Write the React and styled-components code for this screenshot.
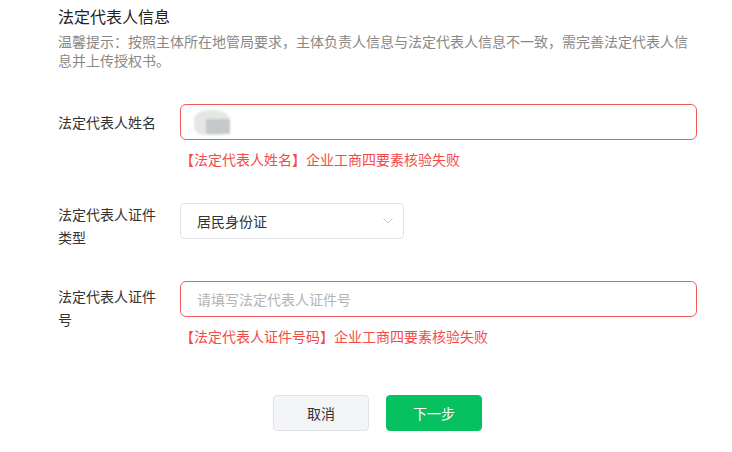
import React from 'react';
import styled, { createGlobalStyle } from 'styled-components';

const GlobalStyle = createGlobalStyle`
  body {
    margin: 0;
    background: #fff;
    font-family: "Noto Sans CJK SC", "Noto Sans", sans-serif;
    color: #333;
  }
`;

const Page = styled.div`
  width: 639px;
  padding: 4px 0 0 58px;
`;

const Title = styled.h3`
  margin: 0;
  font-size: 16px;
  font-weight: 400;
  line-height: 24px;
  color: #222;
`;

const Hint = styled.p`
  margin: 4px 0 0;
  width: 640px;
  font-size: 14px;
  line-height: 19px;
  color: #888;
`;

const Form = styled.div`
  margin-top: 34px;
  display: flex;
  flex-direction: column;
`;

const Row = styled.div`
  display: flex;
  align-items: flex-start;
  margin-bottom: ${p => p.$gap}px;
`;

const Label = styled.div`
  width: 104px;
  padding-right: 18px;
  flex-shrink: 0;
  font-size: 14px;
  line-height: 23px;
  color: #333;
  padding-top: ${p => p.$top}px;
`;

const Field = styled.div`
  flex: 1;
  display: flex;
  flex-direction: column;
`;

const Input = styled.div`
  box-sizing: border-box;
  height: 36px;
  border: 1px solid ${p => (p.$error ? '#f15a5a' : '#dcdfe6')};
  border-radius: 6px;
  display: flex;
  align-items: center;
  padding: 0 16px;
  font-size: 14px;
  color: #333;
`;

const Placeholder = styled.span`
  color: #b4b4b4;
`;

const Blur = styled.span`
  position: relative;
  width: 36px;
  height: 25px;
  margin-left: -3px;
  margin-top: 1px;
  background: #e6e6e4;
  border-radius: 40% 45% 30% 30%;
  filter: blur(1px);

  &::after {
    content: '';
    position: absolute;
    left: 12px;
    top: 9px;
    width: 24px;
    height: 15px;
    background: #c5c9cb;
  }
`;

const Select = styled(Input)`
  width: 224px;
  justify-content: space-between;
  border-radius: 4px;
  border-color: #e2e4e8;
  padding-right: 9px;
`;

const ErrorText = styled.div`
  margin-top: 10px;
  font-size: 14px;
  line-height: 18px;
  color: #f54a4a;
`;

const Actions = styled.div`
  display: flex;
  justify-content: center;
  gap: 17px;
`;

const Button = styled.button`
  width: 96px;
  height: 36px;
  border-radius: 4px;
  font-family: inherit;
  font-size: 14px;
  cursor: pointer;
  border: 1px solid ${p => (p.$primary ? '#07c160' : '#e1e3e6')};
  background: ${p => (p.$primary ? '#07c160' : '#f4f5f7')};
  color: ${p => (p.$primary ? '#fff' : '#333')};
`;

const Chevron = () => (
  <svg width="12" height="8" viewBox="0 0 12 8" fill="none">
    <path d="M1.5 1.5 L6 6 L10.5 1.5" stroke="#c0c4cc" strokeWidth="1" />
  </svg>
);

export default function App() {
  return (
    <Page>
      <GlobalStyle />
      <Title>法定代表人信息</Title>
      <Hint>温馨提示：按照主体所在地管局要求，主体负责人信息与法定代表人信息不一致，需完善法定代表人信息并上传授权书。</Hint>
      <Form>
        <Row $gap={35}>
          <Label $top={7}>法定代表人姓名</Label>
          <Field>
            <Input $error>
              <Blur />
            </Input>
            <ErrorText>【法定代表人姓名】企业工商四要素核验失败</ErrorText>
          </Field>
        </Row>
        <Row $gap={32}>
          <Label $top={0}>法定代表人证件类型</Label>
          <Field>
            <Select>
              <span>居民身份证</span>
              <Chevron />
            </Select>
          </Field>
        </Row>
        <Row $gap={50}>
          <Label $top={4}>法定代表人证件号</Label>
          <Field>
            <Input $error>
              <Placeholder>请填写法定代表人证件号</Placeholder>
            </Input>
            <ErrorText>【法定代表人证件号码】企业工商四要素核验失败</ErrorText>
          </Field>
        </Row>
        <Actions>
          <Button>取消</Button>
          <Button $primary>下一步</Button>
        </Actions>
      </Form>
    </Page>
  );
}
